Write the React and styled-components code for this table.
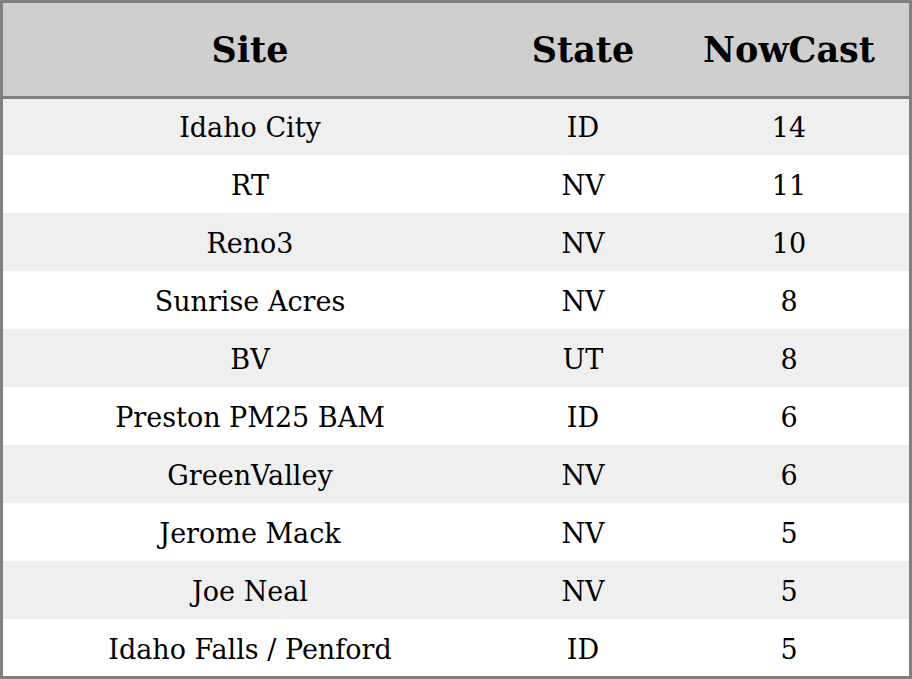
import React from "react";
import styled, { createGlobalStyle } from "styled-components";

const Global = createGlobalStyle`
  html, body { margin: 0; padding: 0; background: #ffffff; }
  body { font-family: "DejaVu Serif", serif; }
`;

const rows = [
  ["Idaho City", "ID", "14"],
  ["RT", "NV", "11"],
  ["Reno3", "NV", "10"],
  ["Sunrise Acres", "NV", "8"],
  ["BV", "UT", "8"],
  ["Preston PM25 BAM", "ID", "6"],
  ["GreenValley", "NV", "6"],
  ["Jerome Mack", "NV", "5"],
  ["Joe Neal", "NV", "5"],
  ["Idaho Falls / Penford", "ID", "5"],
];

const Table = styled.div`
  width: 912px;
  height: 679px;
  box-sizing: border-box;
  border: 3px solid #808080;
  display: flex;
  flex-direction: column;
  overflow: hidden;
`;

const Grid = styled.div`
  display: grid;
  grid-template-columns: 494px 172px 1fr;
  align-items: center;
  justify-items: center;
  flex-shrink: 0;
`;

const Header = styled(Grid)`
  height: 93px;
  background: #cfcfcf;
  border-bottom: 3px solid #808080;
  font-weight: bold;
  font-size: 35px;
  color: #000;
`;

const Row = styled(Grid)`
  height: ${(p) => (p.$first ? 56 : 58)}px;
  box-sizing: border-box;
  padding-top: ${(p) => (p.$first ? 0 : 2)}px;
  background: ${(p) => (p.$odd ? "#efefef" : "#ffffff")};
  font-size: 27px;
  color: #000;
`;

export default function App() {
  return (
    <>
      <Global />
      <Table>
        <Header>
          <span>Site</span>
          <span>State</span>
          <span>NowCast</span>
        </Header>
        {rows.map((r, i) => (
          <Row key={i} $odd={i % 2 === 0} $first={i === 0}>
            <span>{r[0]}</span>
            <span>{r[1]}</span>
            <span>{r[2]}</span>
          </Row>
        ))}
      </Table>
    </>
  );
}
